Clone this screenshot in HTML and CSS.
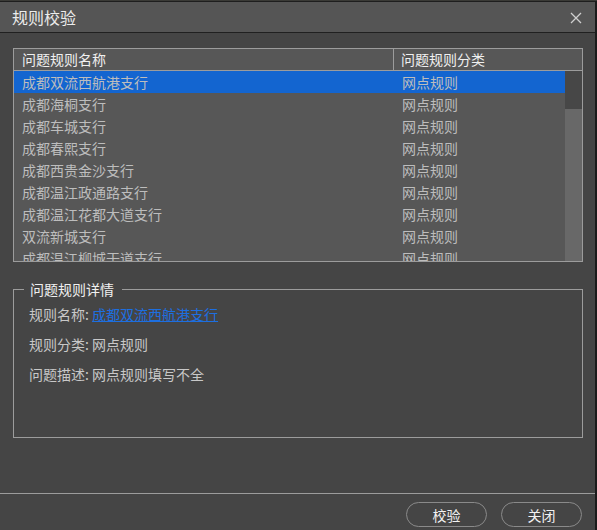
FILE: index.html
```html
<!DOCTYPE html>
<html lang="zh">
<head>
<meta charset="utf-8">
<link rel="stylesheet" href="styles.css">
</head>
<body>
<div class="strip"></div>
<div class="dialog">
  <div class="titlebar">
    <span class="title">规则校验</span>
    <svg class="close" width="12" height="12" viewBox="0 0 12 12"><path d="M1 1 L11 11 M11 1 L1 11" stroke="#cfcfcf" stroke-width="1.3" fill="none"/></svg>
  </div>
  <div class="content">
    <div class="grid">
      <div class="ghead">
        <div class="c1">问题规则名称</div>
        <div class="c2">问题规则分类</div>
      </div>
      <div class="gbody">
        <div class="rows">
          <div class="row sel"><div class="c1">成都双流西航港支行</div><div class="c2">网点规则</div></div>
          <div class="row"><div class="c1">成都海桐支行</div><div class="c2">网点规则</div></div>
          <div class="row"><div class="c1">成都车城支行</div><div class="c2">网点规则</div></div>
          <div class="row"><div class="c1">成都春熙支行</div><div class="c2">网点规则</div></div>
          <div class="row"><div class="c1">成都西贵金沙支行</div><div class="c2">网点规则</div></div>
          <div class="row"><div class="c1">成都温江政通路支行</div><div class="c2">网点规则</div></div>
          <div class="row"><div class="c1">成都温江花都大道支行</div><div class="c2">网点规则</div></div>
          <div class="row"><div class="c1">双流新城支行</div><div class="c2">网点规则</div></div>
          <div class="row"><div class="c1">成都温江柳城干道支行</div><div class="c2">网点规则</div></div>
        </div>
        <div class="scroll"><div class="thumb"></div></div>
      </div>
    </div>
    <fieldset class="detail">
      <legend>问题规则详情</legend>
      <div class="line">规则名称: <a class="link" href="#">成都双流西航港支行</a></div>
      <div class="line">规则分类: 网点规则</div>
      <div class="line">问题描述: 网点规则填写不全</div>
    </fieldset>
  </div>
  <div class="footer">
    <button class="btn">校验</button>
    <button class="btn">关闭</button>
  </div>
</div>
</body>
</html>
```
FILE: styles.css
```css
html, body {
  margin: 0;
  padding: 0;
}
body {
  background: #1b1b1b;
  width: 597px;
  height: 530px;
  overflow: hidden;
  font-family: "Noto Sans CJK SC", "Microsoft YaHei", sans-serif;
  font-size: 14px;
}
.strip {
  height: 1px;
  background: #3a3a36;
}
.dialog {
  width: 595px;
  height: 529px;
  background: #454545;
  border-top: 1px solid #1e1e1e;
  box-sizing: border-box;
  display: flex;
  flex-direction: column;
}
.titlebar {
  height: 30px;
  flex: none;
  background: #555555;
  border-bottom: 1px solid #202020;
  display: flex;
  align-items: center;
  justify-content: space-between;
  padding: 0 13px 0 12px;
}
.title {
  color: #ececec;
  font-size: 16px;
  line-height: 30px;
}
.close {
  display: block;
  margin-top: 1px;
}
.content {
  flex: 1;
  padding: 15px 13px 0 13px;
  display: flex;
  flex-direction: column;
}
.grid {
  width: 570px;
  height: 214px;
  box-sizing: border-box;
  border: 1px solid #9c9c9c;
  background: #575757;
  display: flex;
  flex-direction: column;
}
.ghead {
  height: 22px;
  box-sizing: border-box;
  border-bottom: 1px solid #9c9c9c;
  display: flex;
  flex: none;
  color: #f0f0f0;
  line-height: 21px;
}
.ghead .c1 {
  width: 380px;
  border-right: 1px solid #9c9c9c;
  padding-left: 8px;
  box-sizing: border-box;
}
.ghead .c2 {
  padding-left: 7px;
}
.gbody {
  flex: 1;
  display: flex;
  overflow: hidden;
}
.rows {
  width: 551px;
  overflow: hidden;
}
.row {
  height: 22px;
  line-height: 22px;
  display: flex;
  color: #bdbdbd;
}
.row.sel {
  background: #1365d0;
}
.row .c1 {
  width: 381px;
  padding-left: 8px;
  box-sizing: border-box;
}
.row .c2 {
  padding-left: 7px;
}
.scroll {
  width: 17px;
  background: #686868;
}
.thumb {
  height: 38px;
  background: #474747;
}
.detail {
  margin: 17px 0 0 0;
  padding: 0 10px 0 10px;
  border: 1px solid #9c9c9c;
  width: 570px;
  height: 159px;
  box-sizing: border-box;
  min-width: 0;
}
.detail legend {
  color: #f0f0f0;
  padding: 0 8px 0 6px;
  line-height: 20px;
  font-size: 14px;
}
.line {
  color: #c8c8c8;
  line-height: 30px;
  padding-left: 5px;
}
.link {
  color: #1d6fe0;
  text-decoration: underline;
}
.footer {
  height: 36px;
  flex: none;
  border-top: 1px solid #9c9c9c;
  display: flex;
  justify-content: flex-end;
  align-items: flex-start;
  gap: 14px;
  padding: 8px 13px 0 0;
  box-sizing: border-box;
  height: 37px;
}
.btn {
  width: 81px;
  height: 25px;
  border: 1px solid #8a8a8a;
  border-radius: 13px;
  background: #454545;
  color: #f2f2f2;
  font-family: "Noto Sans CJK SC", sans-serif;
  font-size: 14px;
  line-height: 22px;
  padding: 0;
}
```
